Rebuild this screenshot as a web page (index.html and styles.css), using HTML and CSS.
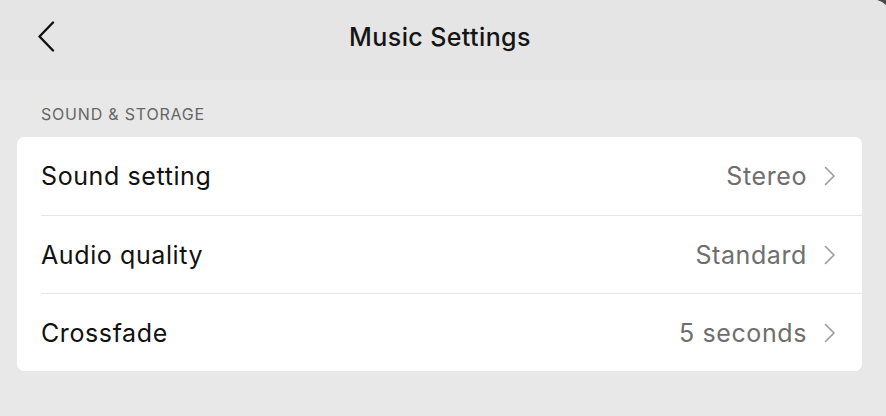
FILE: index.html
```html
<!DOCTYPE html>
<html lang="en">
<head>
<meta charset="utf-8">
<title>Music Settings</title>
<link rel="stylesheet" href="styles.css">
</head>
<body>
<div class="app">
  <header class="topbar">
    <div class="topbar-left">
      <button class="back" aria-label="Back">
        <svg width="18" height="32" viewBox="0 0 18 32"><path d="M15 1.5 L1.5 15.5 L15 29.5" fill="none" stroke="#111" stroke-width="2.4" stroke-linecap="round" stroke-linejoin="round"/></svg>
      </button>
    </div>
    <h1 class="title">Music Settings</h1>
    <div class="topbar-right"></div>
  </header>
  <main class="content">
    <div class="section-label">SOUND &amp; STORAGE</div>
    <div class="card">
      <div class="row">
        <div class="row-inner">
          <span class="row-label">Sound setting</span>
          <span class="row-value">Stereo</span>
          <svg class="chev" width="12" height="20" viewBox="0 0 12 20"><path d="M1.5 1.5 L10 10 L1.5 18.5" fill="none" stroke="#9a9a9a" stroke-width="1.6" stroke-linecap="round" stroke-linejoin="round"/></svg>
        </div>
      </div>
      <div class="row">
        <div class="row-inner">
          <span class="row-label">Audio quality</span>
          <span class="row-value">Standard</span>
          <svg class="chev" width="12" height="20" viewBox="0 0 12 20"><path d="M1.5 1.5 L10 10 L1.5 18.5" fill="none" stroke="#9a9a9a" stroke-width="1.6" stroke-linecap="round" stroke-linejoin="round"/></svg>
        </div>
      </div>
      <div class="row">
        <div class="row-inner">
          <span class="row-label">Crossfade</span>
          <span class="row-value">5 seconds</span>
          <svg class="chev" width="12" height="20" viewBox="0 0 12 20"><path d="M1.5 1.5 L10 10 L1.5 18.5" fill="none" stroke="#9a9a9a" stroke-width="1.6" stroke-linecap="round" stroke-linejoin="round"/></svg>
        </div>
      </div>
    </div>
  </main>
</div>
</body>
</html>
```
FILE: styles.css
```css
html {
  margin: 0;
  padding: 0;
  background: #4a4a4a;
  overflow: hidden;
}
body {
  margin: 0;
  padding: 0;
  font-family: Inter, "Liberation Sans", sans-serif;
}
.app {
  width: calc(100% + 4px);
  height: 416px;
  background: #e8e8e8;
  border-top-right-radius: 16px;
  overflow: hidden;
}
.topbar {
  height: 80px;
  background: #e5e5e5;
  display: grid;
  grid-template-columns: 1fr auto 1fr;
  align-items: center;
}
.topbar-left {
  padding-left: 38px;
  display: flex;
  align-items: center;
}
.back {
  background: none;
  border: 0;
  padding: 0;
  margin-top: -6px;
  display: flex;
  cursor: pointer;
}
.title {
  margin: 0 10px 6px 0;
  font-size: 25px;
  font-weight: 500;
  color: #151515;
  letter-spacing: 0.4px;
}
.content {
  padding: 0 28px 0 17px;
}
.section-label {
  padding: 24px 0 0 24px;
  height: 33px;
  font-size: 16px;
  color: #666666;
  letter-spacing: 0.8px;
}
.card {
  background: #ffffff;
  border-radius: 7px;
}
.row {
  padding-left: 24px;
}
.row-inner {
  height: 78px;
  box-sizing: border-box;
  display: flex;
  align-items: center;
  padding-right: 26px;
  border-top: 1px solid #e6e6e6;
}
.row:first-child .row-inner {
  border-top: 0;
}
.row-label {
  flex: 1;
  font-size: 25px;
  color: #111;
  letter-spacing: 0.6px;
}
.row-value {
  font-size: 25px;
  color: #6e6e6e;
  margin-right: 17px;
  letter-spacing: 0.6px;
}
.chev {
  display: block;
}
```
